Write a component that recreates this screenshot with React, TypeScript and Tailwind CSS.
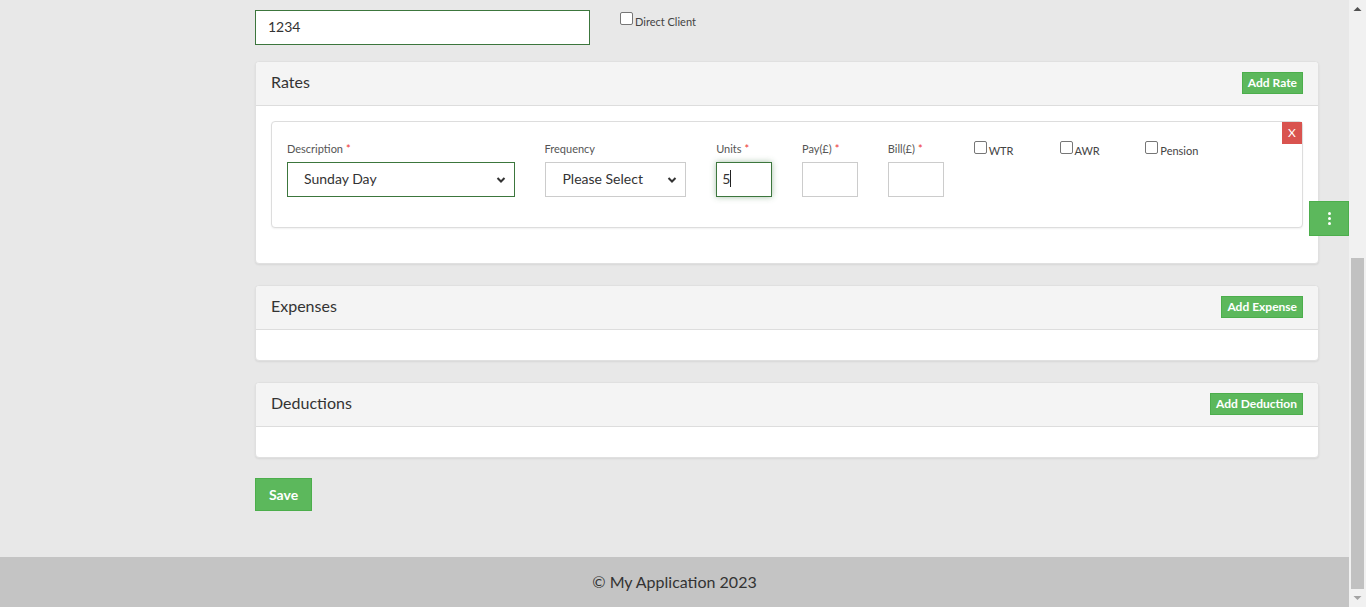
import { useState } from 'react';

const font = { fontFamily: 'Lato, "Liberation Sans", sans-serif' };

function Chevron() {
  return (
    <svg width="10" height="7" viewBox="0 0 10 7" className="pointer-events-none absolute right-[9px] top-1/2 -translate-y-1/2">
      <path d="M1.5 1.5 L5 5 L8.5 1.5" fill="none" stroke="#333" strokeWidth="2" />
    </svg>
  );
}

function Box({ label }: { label: string }) {
  return (
    <label className="flex items-start gap-[2px] text-[11px] leading-[18px] text-[#444]">
      <input type="checkbox" className="mt-[1px] h-[13px] w-[13px] appearance-none rounded-[2px] border border-[#767676] bg-white" />
      <span className="mt-[2px]">{label}</span>
    </label>
  );
}

function Label({ text, required }: { text: string; required?: boolean }) {
  return (
    <div className="mb-[4px] text-[11px] leading-[18px] text-[#555]">
      {text}
      {required && <span className="ml-[3px] text-[#e33]">*</span>}
    </div>
  );
}

function Card({ title, action, children }: { title: string; action: string; children?: React.ReactNode }) {
  return (
    <div className="mb-[21px] rounded-[4px] border border-[#e0e0e0] bg-white shadow-[0_1px_2px_rgba(0,0,0,0.08)]">
      <div className="flex h-[44px] items-center justify-between rounded-t-[4px] border-b border-[#ddd] bg-[#f4f4f4] px-[15px]">
        <span className="-mt-[4px] text-base text-[#333]">{title}</span>
        <button className="-mt-[2px] border border-[#4cae4c] bg-[#5cb85c] px-[5px] py-px text-xs font-bold leading-[18px] text-white">
          {action}
        </button>
      </div>
      <div className="p-[15px]">{children}</div>
    </div>
  );
}

export default function App() {
  const [units] = useState('5');

  return (
    <div style={font} className="relative flex h-[607px] w-[1366px] overflow-hidden bg-[#e8e8e8]">
      <div className="flex flex-1 flex-col">
        <main className="flex-1 pl-[255px]">
          <div className="-mt-[14px] w-[1064px]">
            <div className="flex">
              <div className="w-[365px]">
                <div className="mb-[6px] text-[11px] leading-[18px] text-[#555]">Timesheet Number</div>
                <input
                  readOnly
                  value="1234"
                  className="h-[35px] w-[335px] border border-[#3c763d] bg-white px-[12px] pb-[2px] text-sm text-[#333] outline-none"
                />
              </div>
              <label className="mt-[26px] flex items-start gap-[2px] text-[11px] leading-[18px] text-[#444]">
                <input type="checkbox" className="h-[13px] w-[13px] appearance-none rounded-[2px] border border-[#767676] bg-white" />
                <span className="mt-[1px]">Direct Client</span>
              </label>
            </div>

            <div className="mt-[16px]">
              <Card title="Rates" action="Add Rate">
                <div className="relative mb-[20px] rounded-[4px] border border-[#ddd] bg-white pb-[30px] pt-[18px] shadow-[0_1px_2px_rgba(0,0,0,0.06)]">
                  <button className="absolute right-0 top-0 h-[22px] w-[20px] bg-[#d9534f] text-xs text-white">X</button>
                  <div className="grid grid-cols-12">
                    <div className="col-span-3 px-[15px]">
                      <Label text="Description" required />
                      <div className="relative">
                        <select className="h-[35px] w-full appearance-none border border-[#3c763d] bg-white pb-[2px] pl-[16px] text-sm text-[#333] outline-none" defaultValue="sunday">
                          <option value="sunday">Sunday Day</option>
                        </select>
                        <Chevron />
                      </div>
                    </div>
                    <div className="col-span-2 px-[15px]">
                      <Label text="Frequency" />
                      <div className="relative">
                        <select className="h-[35px] w-full appearance-none border border-[#ccc] bg-white pb-[2px] pl-[17px] text-sm text-[#333] outline-none">
                          <option>Please Select</option>
                        </select>
                        <Chevron />
                      </div>
                    </div>
                    <div className="px-[15px]">
                      <Label text="Units" required />
                      <div className="relative">
                        <input
                          readOnly
                          value={units}
                          className="h-[35px] w-full border border-[#3c763d] bg-white px-[5px] pb-[2px] text-sm text-[#333] shadow-[0_0_6px_rgba(60,118,61,0.45)] outline-none"
                        />
                        <span className="absolute left-[14px] top-[8px] h-[17px] w-px bg-[#222]" />
                      </div>
                    </div>
                    <div className="px-[15px]">
                      <Label text="Pay(£)" required />
                      <input className="h-[35px] w-full border border-[#ccc] bg-white outline-none" />
                    </div>
                    <div className="px-[15px]">
                      <Label text="Bill(£)" required />
                      <input className="h-[35px] w-full border border-[#ccc] bg-white outline-none" />
                    </div>
                    <div className="px-[15px]">
                      <Box label="WTR" />
                    </div>
                    <div className="px-[15px]">
                      <Box label="AWR" />
                    </div>
                    <div className="px-[15px]">
                      <Box label="Pension" />
                    </div>
                  </div>
                </div>
              </Card>
              <Card title="Expenses" action="Add Expense" />
              <Card title="Deductions" action="Add Deduction" />
            </div>

            <button className="-mt-[1px] border border-[#4cae4c] bg-[#5cb85c] px-[13px] py-[6px] text-sm font-bold leading-[19px] text-white">
              Save
            </button>
          </div>
        </main>
        <footer className="flex h-[50px] items-center justify-center bg-[#c4c4c4] text-base text-[#333]">
          © My Application 2023
        </footer>
      </div>

      <button className="absolute left-[1309px] top-[201px] flex h-[35px] w-[40px] flex-col items-center justify-center gap-[2px] border border-[#4cae4c] bg-[#5cb85c]">
        <span className="h-[3px] w-[3px] rounded-full bg-white" />
        <span className="h-[3px] w-[3px] rounded-full bg-white" />
        <span className="h-[3px] w-[3px] rounded-full bg-white" />
      </button>

      <div className="flex w-[17px] flex-col items-center bg-[#f1f1f1]">
        <svg width="9" height="17" viewBox="0 0 9 17" className="shrink-0">
          <path d="M0.5 11 L4.5 7 L8.5 11 Z" fill="#505050" />
        </svg>
        <div className="mt-[241px] h-[331px] w-[13px] bg-[#c1c1c1]" />
        <svg width="9" height="17" viewBox="0 0 9 17" className="mt-auto shrink-0">
          <path d="M0.5 6 L4.5 10 L8.5 6 Z" fill="#a3a3a3" />
        </svg>
      </div>
    </div>
  );
}
